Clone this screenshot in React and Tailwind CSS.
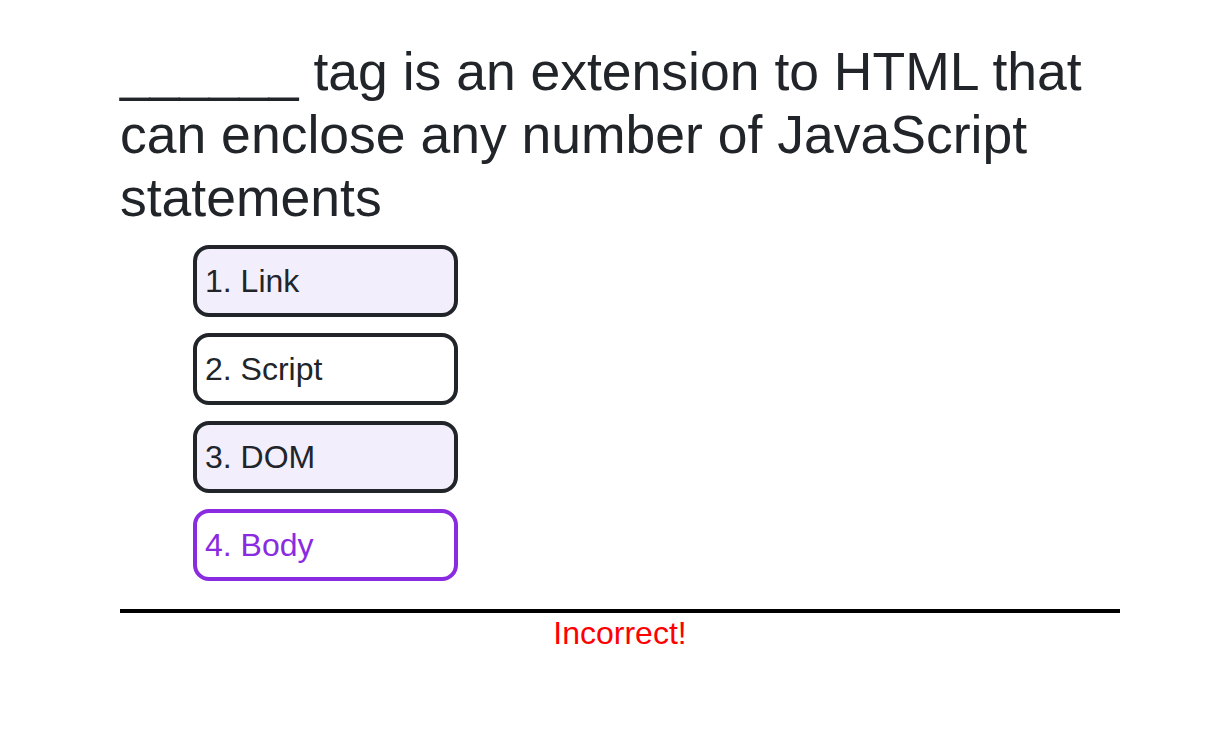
const choices = [
  { label: '1. Link', tint: true },
  { label: '2. Script', tint: false },
  { label: '3. DOM', tint: true },
  { label: '4. Body', picked: true },
]

export default function App() {
  return (
    <div className="min-h-screen bg-white font-['Liberation_Sans',Arial,sans-serif] text-[#212529]">
      <div className="ml-[120px] w-[1000px] pt-[40px]">
        {/* Question */}
        <h1 className="text-[53.5px] leading-[63px] font-normal">
          ______ tag is an extension to HTML that can enclose any number of JavaScript statements
        </h1>

        {/* Choices */}
        <div className="mt-[16px] ml-[73px] flex flex-col gap-[16px]">
          {choices.map((c) => (
            <button
              key={c.label}
              className={
                c.picked
                  ? 'w-[265px] h-[72px] flex items-center px-[8px] rounded-[16px] border-4 border-[#8a2be2] bg-white text-[#8a2be2] text-[32px] text-left'
                  : c.tint
                  ? 'w-[265px] h-[72px] flex items-center px-[8px] rounded-[16px] border-4 border-[#212529] bg-[#f3eefc] text-[32px] text-left'
                  : 'w-[265px] h-[72px] flex items-center px-[8px] rounded-[16px] border-4 border-[#212529] bg-white text-[32px] text-left'
              }
            >
              {c.label}
            </button>
          ))}
        </div>

        {/* Result */}
        <div className="mt-[28px] border-t-4 border-black text-center">
          <p className="text-[32px] leading-[40px] text-[#ff0000]">Incorrect!</p>
        </div>
      </div>
    </div>
  )
}
